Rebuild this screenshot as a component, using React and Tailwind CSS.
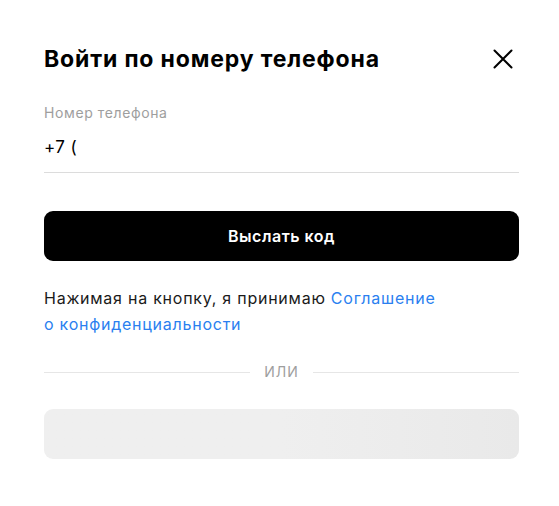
import React from 'react';

const CloseIcon = () => (
    <svg width="20" height="20" viewBox="0 0 20 20" fill="none" stroke="#000" strokeWidth="2" strokeLinecap="round">
        <path d="M1.5 1.5 L18.5 18.5 M18.5 1.5 L1.5 18.5" />
    </svg>
);

export default function App() {
    return (
        <div className="min-h-screen w-full bg-white font-['Inter',sans-serif] text-black">
            <div className="pl-[44px] pr-[40px] pt-[44px] pb-10">
                {/* Header */}
                <div className="flex items-center justify-between h-[30px]">
                    <h1 className="text-[23px] font-bold leading-[30px] tracking-[0.85px]">Войти по номеру телефона</h1>
                    <button className="mr-[6px] flex items-center justify-center">
                        <CloseIcon />
                    </button>
                </div>

                {/* Phone field */}
                <div className="mt-[31px]">
                    <div className="text-[14px] leading-4 tracking-[0.6px] text-[#9e9e9e]">Номер телефона</div>
                    <div className="mt-[16px] pb-[15px] border-b border-[#dcdcdc] text-[17px] leading-5 tracking-[0.4px]">+7 (</div>
                </div>

                {/* Submit */}
                <button className="mt-[38px] h-[50px] w-full rounded-[9px] bg-black text-white text-[16px] font-semibold tracking-[0.5px]">
                    Выслать код
                </button>

                {/* Agreement */}
                <p className="mt-[24px] text-[16px] leading-[26px] tracking-[0.75px] text-[#1a1a1a]">
                    Нажимая на кнопку, я принимаю <a className="text-[#2a7ff0]" href="#">Соглашение</a>
                    <br />
                    <a className="text-[#2a7ff0]" href="#">о конфиденциальности</a>
                </p>

                {/* Divider */}
                <div className="mt-[27px] flex items-center gap-[14px]">
                    <div className="flex-1 h-px bg-[#e6e6e6]" />
                    <span className="text-[14px] leading-4 tracking-[1px] text-[#9e9e9e]">ИЛИ</span>
                    <div className="flex-1 h-px bg-[#e6e6e6]" />
                </div>

                {/* Skeleton */}
                <div className="mt-[29px] h-[50px] w-full rounded-[9px] bg-gradient-to-r from-[#efefef] via-[#efefef] to-[#e9e9e9]" />
            </div>
        </div>
    );
}
